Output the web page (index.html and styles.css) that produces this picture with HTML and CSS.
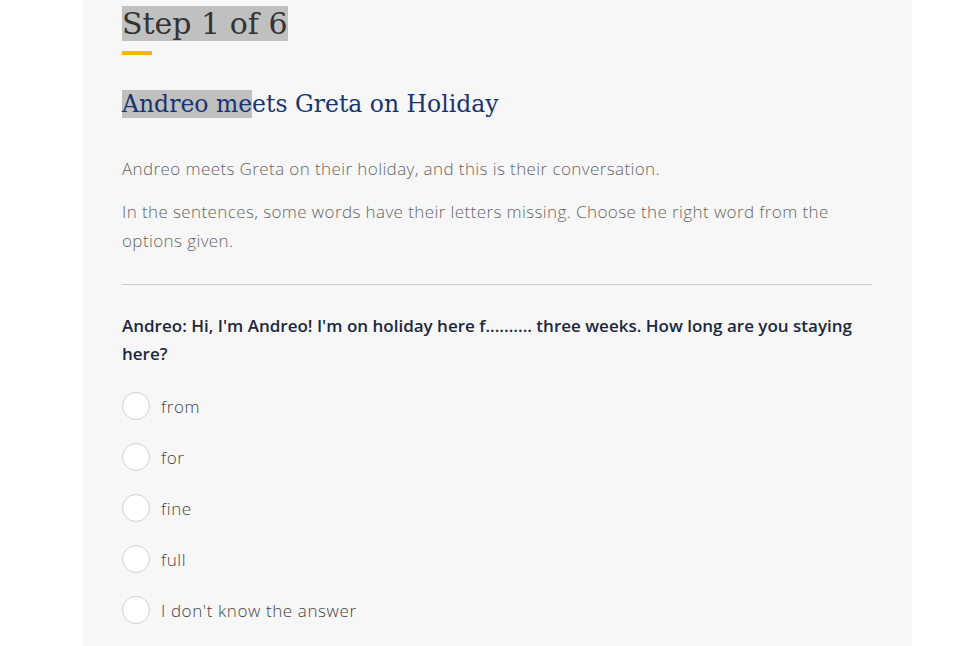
FILE: index.html
```html
<!DOCTYPE html>
<html>
    <head>
        <title>Step 1 of 6</title>
        <link rel="stylesheet" href="styles.css">
    </head>
    <body>
        <div class="panel">
            <h1 class="step-title"><span class="selected">Step 1 of 6</span></h1>
            <div class="step-bar"></div>

            <h2 class="lesson-title"><span class="selected">Andreo me</span>ets Greta on Holiday</h2>

            <p class="intro">Andreo meets Greta on their holiday, and this is their conversation.</p>
            <p class="intro">In the sentences, some words have their letters missing. Choose the right word from the options given.</p>

            <hr class="divider">

            <p class="question">Andreo: Hi, I'm Andreo! I'm on holiday here f.......... three weeks. How long are you staying here?</p>

            <div class="options">
                <label class="option"><span class="radio"></span>from</label>
                <label class="option"><span class="radio"></span>for</label>
                <label class="option"><span class="radio"></span>fine</label>
                <label class="option"><span class="radio"></span>full</label>
                <label class="option"><span class="radio"></span>I don't know the answer</label>
            </div>
        </div>
    </body>
</html>
```

FILE: styles.css
```css
body{
    margin:0;
    background-color:white;
}
.panel{
    background-color:rgb(247, 247, 247);
    margin-left:82px;
    width:750px;
    min-height:646px;
    padding:4px 40px 0 40px;
    box-sizing:content-box;
}
.selected{
    background-color:rgb(192, 192, 192);
}
.step-title{
    margin:0;
    font-family:"DejaVu Serif", serif;
    font-weight:normal;
    font-size:30px;
    line-height:39px;
    color:rgb(51, 51, 51);
}
.step-bar{
    width:30px;
    height:4px;
    background-color:rgb(242, 185, 0);
    margin-top:8px;
}
.lesson-title{
    margin:34px 0 0 0;
    font-family:"DejaVu Serif", serif;
    font-weight:normal;
    font-size:23.5px;
    line-height:30px;
    color:rgb(22, 53, 115);
}
.intro{
    font-family:"Open Sans", sans-serif;
    font-weight:300;
    font-size:17px;
    letter-spacing:0.4px;
    line-height:29px;
    color:rgb(102, 102, 102);
    margin:35px 0 0 0;
}
.intro + .intro{
    margin-top:14px;
}
.divider{
    border:none;
    border-top:1px solid rgb(204, 204, 204);
    margin:29px 0 0 0;
}
.question{
    font-family:"Open Sans", sans-serif;
    font-weight:600;
    font-size:17px;
    line-height:28px;
    color:rgb(28, 40, 62);
    margin:27px 0 0 0;
}
.options{
    display:flex;
    flex-direction:column;
    gap:23px;
    margin-top:24px;
}
.option{
    display:flex;
    align-items:center;
    gap:11px;
    font-family:"Open Sans", sans-serif;
    font-weight:300;
    font-size:17px;
    letter-spacing:0.6px;
    color:rgb(68, 68, 68);
    height:28px;
}
.radio{
    width:26px;
    height:26px;
    border:1px solid rgb(210, 210, 210);
    border-radius:50%;
    background-color:white;
}
```
